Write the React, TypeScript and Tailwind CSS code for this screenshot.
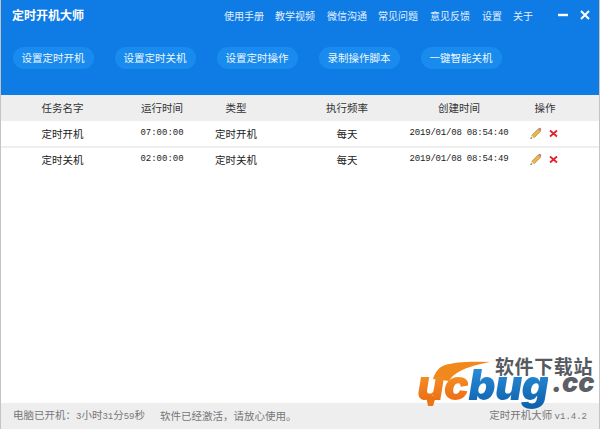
const font = { fontFamily: '"Noto Sans CJK SC", "Liberation Sans", sans-serif' }
const mono = { fontFamily: '"Liberation Mono", monospace' }
const logoFont = { fontFamily: 'Inter, "Liberation Sans", sans-serif' }

const menu = [
  { label: '使用手册', width: 'w-[51px]' },
  { label: '教学视频', width: 'w-[52px]' },
  { label: '微信沟通', width: 'w-[51px]' },
  { label: '常见问题', width: 'w-[52px]' },
  { label: '意见反馈', width: 'w-[52px]' },
  { label: '设置', width: 'w-[31px]' },
  { label: '关于', width: 'w-[41px]' },
]
const actions = ['设置定时开机', '设置定时关机', '设置定时操作', '录制操作脚本', '一键智能关机']
const grid = 'grid grid-cols-[138px_46px_102px_120px_104px_68px] items-center text-center'
const tasks = [
  { name: '定时开机', time: '07:00:00', created: '2019/01/08 08:54:40' },
  { name: '定时关机', time: '02:00:00', created: '2019/01/08 08:54:49' },
]

function Pencil() {
  return (
    <svg width="13" height="13" viewBox="0 0 14 14">
      <path d="M3 9 L10 2 L12.5 4.500 L5.500 11.500 Z" fill="#e8b84e" stroke="#a87c2c" strokeWidth="0.7" />
      <path d="M10 2 L11 1 Q11.700 .6 12.300 1.200 L13 1.900 Q13.400 2.600 13 3 L12.500 4.500 Z" fill="#c67a8c" />
      <path d="M3 9 L5.500 11.500 L1.500 13 Z" fill="#f0dcae" />
      <path d="M1.500 13 L2.200 11 L3.300 12.100 Z" fill="#4a3a20" />
    </svg>
  )
}

function Cross() {
  return (
    <svg width="9" height="9" viewBox="0 0 9 9">
      <path d="M1 1.500 L8 7.500 M8 1.500 L1 7.500" stroke="#e0242c" strokeWidth="1.800" />
    </svg>
  )
}

function Logo() {
  return (
    <div className="absolute top-[350px] right-0 h-[64px] w-[190px]">
      <svg className="absolute top-0 left-0" width="190" height="64" viewBox="0 0 190 64">
        <path d="M81 12 C60 11 46 12 36 15 C30 17 26 22 24 29 L40 31 C44 24 54 17 81 12 Z" fill="#f0881c" />
        <path d="M17 46 L27 46 L24 56 L19 56 Z" fill="#ec7414" />
      </svg>
      <span className="absolute top-[8px] left-[86px] text-[19px] leading-[16px] font-bold tracking-[0.6px] whitespace-nowrap text-[#565a60]">
        软件下载站
      </span>
      <span
        className="absolute top-[20px] left-[8px] text-[42px] leading-[30px] font-black italic whitespace-nowrap tracking-[-0.6px]"
        style={logoFont}
      >
        <span className="bg-gradient-to-b from-[#f9a02c] to-[#e8640e] bg-clip-text text-transparent">uc</span>
        <span className="bg-gradient-to-b from-[#2f98e2] to-[#0c5ea8] bg-clip-text text-transparent">bug</span>
      </span>
      <span
        className="absolute top-[24px] left-[143px] text-[27px] leading-[18px] font-black italic whitespace-nowrap text-[#5c6066]"
        style={logoFont}
      >
        .cc
      </span>
    </div>
  )
}

export default function App() {
  return (
    <div className="relative flex h-[429px] w-[600px] flex-col overflow-hidden border-x border-[#c4c4c4] bg-white" style={font}>
      <header className="h-[95px] shrink-0 bg-[#0f7be5] text-white">
        <div className="flex h-[30px] items-center">
          <span className="ml-[11px] w-[212px] text-[12px] font-bold">定时开机大师</span>
          <nav className="flex text-[10px] text-[#e4f1ff]">
            {menu.map(m => (
              <span key={m.label} className={m.width}>{m.label}</span>
            ))}
          </nav>
          <svg className="ml-[4px]" width="10" height="10" viewBox="0 0 10 10">
            <path d="M0 5 H10" stroke="white" strokeWidth="2.400" />
          </svg>
          <svg className="ml-[12px]" width="10" height="10" viewBox="0 0 10 10">
            <path d="M1 1 L9 9 M9 1 L1 9" stroke="white" strokeWidth="2" />
          </svg>
        </div>
        <div className="mt-[17px] ml-[12px] flex gap-[21px]">
          {actions.map(a => (
            <button key={a} className="h-[22px] w-[81px] rounded-full bg-[#1a8bee] pr-[1px] text-[10.500px] text-[#eef7ff]">
              {a}
            </button>
          ))}
        </div>
      </header>

      <div className={`${grid} h-[26px] shrink-0 bg-[#eeeeee] text-[10.500px] text-[#333333]`}>
        <span className="pr-[15px]">任务名字</span>
        <span>运行时间</span>
        <span>类型</span>
        <span>执行频率</span>
        <span>创建时间</span>
        <span>操作</span>
      </div>

      <div className="flex-1 text-[10.500px] text-[#222222]">
        {tasks.map((t, i) => (
          <div key={t.name} className={i === 0 ? `${grid} h-[27px] border-b-2 border-[#eeeeee]` : `${grid} h-[23px]`}>
            <span className="pr-[15px]">{t.name}</span>
            <span className="text-[9px]" style={mono}>{t.time}</span>
            <span>{t.name}</span>
            <span>每天</span>
            <span className="text-[9px] tracking-[-0.2px] whitespace-nowrap" style={mono}>{t.created}</span>
            <span className="flex items-center justify-center gap-[7px] pr-[3px]">
              <Pencil />
              <Cross />
            </span>
          </div>
        ))}
      </div>

      <footer className="flex h-[26px] shrink-0 items-center bg-[#eeeeee] text-[10.500px] text-[#777777]">
        <span className="ml-[12px] w-[147px]">
          电脑已开机：<span className="text-[9px]" style={mono}>3</span>小时<span className="text-[9px]" style={mono}>31</span>分<span className="text-[9px]" style={mono}>59</span>秒
        </span>
        <span>软件已经激活，请放心使用。</span>
        <span className="mr-[12px] ml-auto">
          定时开机大师 <span className="text-[9px]" style={mono}>v1.4.2</span>
        </span>
      </footer>

      <Logo />
    </div>
  )
}
